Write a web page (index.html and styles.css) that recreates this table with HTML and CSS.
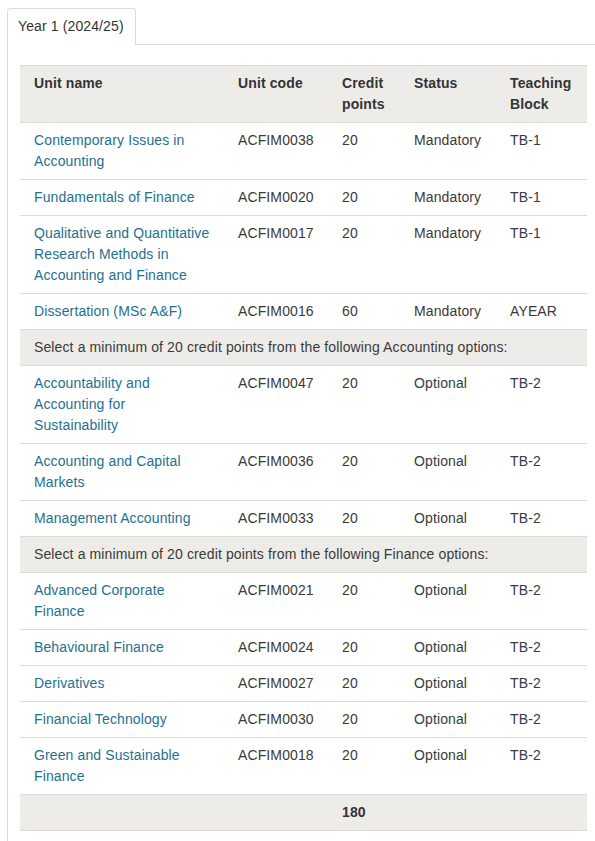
FILE: index.html
```html
<!DOCTYPE html>
<html>
<head>
<meta charset="utf-8">
<link rel="stylesheet" href="styles.css">
</head>
<body>
<div class="tabs">
  <div class="tab-list"><div class="tab">Year 1 (2024/25)</div></div>
  <div class="panel">
    <table class="units">
      <colgroup>
        <col class="c1"><col class="c2"><col class="c3"><col class="c4"><col class="c5">
      </colgroup>
      <thead>
        <tr><th>Unit name</th><th>Unit code</th><th>Credit points</th><th>Status</th><th>Teaching Block</th></tr>
      </thead>
      <tbody>
        <tr><td><a href="#">Contemporary Issues in Accounting</a></td><td>ACFIM0038</td><td>20</td><td>Mandatory</td><td>TB-1</td></tr>
        <tr><td><a href="#">Fundamentals of Finance</a></td><td>ACFIM0020</td><td>20</td><td>Mandatory</td><td>TB-1</td></tr>
        <tr><td><a href="#">Qualitative and Quantitative Research Methods in Accounting and Finance</a></td><td>ACFIM0017</td><td>20</td><td>Mandatory</td><td>TB-1</td></tr>
        <tr><td><a href="#">Dissertation (MSc A&amp;F)</a></td><td>ACFIM0016</td><td>60</td><td>Mandatory</td><td>AYEAR</td></tr>
        <tr class="group"><td colspan="5">Select a minimum of 20 credit points from the following Accounting options:</td></tr>
        <tr><td><a href="#">Accountability and Accounting for Sustainability</a></td><td>ACFIM0047</td><td>20</td><td>Optional</td><td>TB-2</td></tr>
        <tr><td><a href="#">Accounting and Capital Markets</a></td><td>ACFIM0036</td><td>20</td><td>Optional</td><td>TB-2</td></tr>
        <tr><td><a href="#">Management Accounting</a></td><td>ACFIM0033</td><td>20</td><td>Optional</td><td>TB-2</td></tr>
        <tr class="group"><td colspan="5">Select a minimum of 20 credit points from the following Finance options:</td></tr>
        <tr><td><a href="#">Advanced Corporate Finance</a></td><td>ACFIM0021</td><td>20</td><td>Optional</td><td>TB-2</td></tr>
        <tr><td><a href="#">Behavioural Finance</a></td><td>ACFIM0024</td><td>20</td><td>Optional</td><td>TB-2</td></tr>
        <tr><td><a href="#">Derivatives</a></td><td>ACFIM0027</td><td>20</td><td>Optional</td><td>TB-2</td></tr>
        <tr><td><a href="#">Financial Technology</a></td><td>ACFIM0030</td><td>20</td><td>Optional</td><td>TB-2</td></tr>
        <tr><td><a href="#">Green and Sustainable Finance</a></td><td>ACFIM0018</td><td>20</td><td>Optional</td><td>TB-2</td></tr>
      </tbody>
      <tfoot>
        <tr><td></td><td></td><td class="total">180</td><td></td><td></td></tr>
      </tfoot>
    </table>
  </div>
</div>
</body>
</html>
```

FILE: styles.css
```css
html, body {
  margin: 0;
  padding: 0;
  background: #fff;
}
body {
  padding: 8px 0 0 7px;
  font-family: "Liberation Sans", Arial, sans-serif;
  font-size: 14px;
  line-height: 21px;
  letter-spacing: 0.12px;
  color: #333;
}
.tabs {
  width: 588px;
}
.tab-list {
  display: flex;
}
.tab {
  border: 1px solid #dedbd6;
  border-bottom: none;
  border-radius: 4px 4px 0 0;
  background: #fff;
  padding: 7px 11px 8px 10px;
  color: #333;
  position: relative;
  margin-bottom: -1px;
  z-index: 1;
  height: 21px;
}
.panel {
  border-left: 1px solid #dedbd6;
  border-top: 1px solid #dedbd6;
  padding: 20px 8px 40px 12px;
}
.units {
  width: 567px;
  border-collapse: collapse;
  table-layout: fixed;
}
.c1 { width: 204px; }
.c2 { width: 104px; }
.c3 { width: 72px; }
.c4 { width: 96px; }
.c5 { width: 91px; }
.units th,
.units td {
  text-align: left;
  vertical-align: top;
  padding: 7px 14px 7px 14px;
  border-top: 1px solid #dedbd6;
}
.units th {
  font-weight: bold;
  background: #eeece9;
  color: #333;
}
.units td {
  color: #3a3a3a;
}
.units a {
  color: #23718f;
  text-decoration: none;
}
.group td {
  background: #eeece9;
}
.units tfoot td {
  background: #eeece9;
  border-bottom: 1px solid #dedbd6;
}
.units .total {
  font-weight: bold;
  color: #333;
}
```
